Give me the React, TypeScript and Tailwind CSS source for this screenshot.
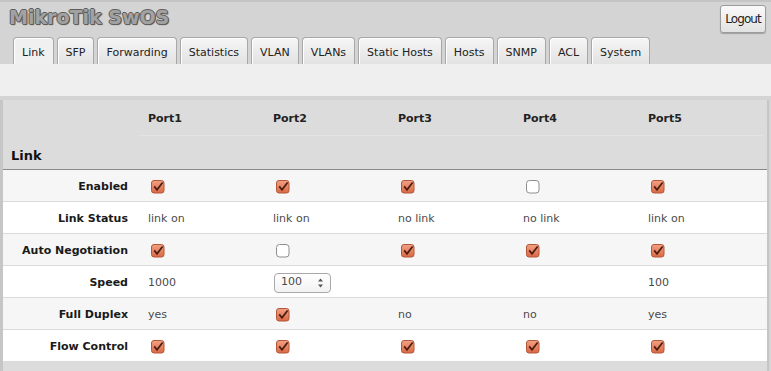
const tabs = ["Link", "SFP", "Forwarding", "Statistics", "VLAN", "VLANs", "Static Hosts", "Hosts", "SNMP", "ACL", "System"];
const ports = ["Port1", "Port2", "Port3", "Port4", "Port5"];

type Cell = boolean | string | { input: string };

const rows: { label: string; cells: Cell[] }[] = [
  { label: "Enabled", cells: [true, true, true, false, true] },
  { label: "Link Status", cells: ["link on", "link on", "no link", "no link", "link on"] },
  { label: "Auto Negotiation", cells: [true, false, true, true, true] },
  { label: "Speed", cells: ["1000", { input: "100" }, "", "", "100"] },
  { label: "Full Duplex", cells: ["yes", true, "no", "no", "yes"] },
  { label: "Flow Control", cells: [true, true, true, true, true] },
];

function Check({ on }: { on: boolean }) {
  if (!on) {
    return (
      <svg width="14" height="14" viewBox="0 0 14 14" className="ml-[3px] block">
        <rect x="0.5" y="0.5" width="12.5" height="12.5" rx="3" fill="#fff" stroke="#8e8e8e" />
      </svg>
    );
  }
  return (
    <svg width="14" height="14" viewBox="0 0 14 14" className="ml-[3px] block">
      <defs>
        <linearGradient id="cbfill" x1="0" y1="0" x2="0" y2="1">
          <stop offset="0" stopColor="#f3a184" />
          <stop offset="1" stopColor="#db6843" />
        </linearGradient>
      </defs>
      <rect x="0.5" y="0.5" width="12.5" height="12.5" rx="2.5" fill="url(#cbfill)" stroke="#b1573a" />
      <path d="M3.2 6.4 L6 9.8 L11.6 2.4" stroke="#4b1d10" strokeWidth="1.7" fill="none" />
    </svg>
  );
}

function SpeedInput({ value }: { value: string }) {
  return (
    <div className="ml-px flex h-[20px] w-[57px] items-center justify-between rounded-[4px] border border-[#a9a9a9] bg-gradient-to-b from-white to-[#f2f2f2] pl-[6px] pr-[6px]">
      <span>{value}</span>
      <svg width="7" height="12" viewBox="0 0 7 12">
        <path d="M1 4.5 L3.5 1.5 L6 4.5 Z" fill="#555" />
        <path d="M1 7.5 L3.5 10.5 L6 7.5 Z" fill="#555" />
      </svg>
    </div>
  );
}

function CellView({ cell }: { cell: Cell }) {
  if (typeof cell === "boolean") return <Check on={cell} />;
  if (typeof cell === "string") return <span className="pt-[2px]">{cell}</span>;
  return <SpeedInput value={cell.input} />;
}

export default function App() {
  return (
    <div className="h-[371px] w-[771px] overflow-hidden bg-[#d4d4d4] font-['DejaVu_Sans',sans-serif] text-[11px]">
      <div className="flex h-[37px] items-start justify-between border-t-2 border-[#c4c4c4]">
        <h1 className="pl-[9px] pt-[5px] text-[19px] font-bold leading-[20px] text-[#a2a2a2] [text-shadow:-1px_0_0_#5e5e5e,1px_0_0_#5e5e5e,0_-1px_0_#5e5e5e,0_1px_0_#5e5e5e,1px_1px_1px_#444]">
          MikroTik SwOS
        </h1>
        <button className="mr-[5px] mt-[3px] h-[28px] w-[46px] rounded-[3px] border border-[#9c9c9c] bg-gradient-to-b from-[#fafafa] to-[#e2e2e2] text-[12px] tracking-[-0.9px] text-[#1e1e1e] shadow-[0_1px_1px_rgba(0,0,0,0.25)]">
          Logout
        </button>
      </div>

      <div className="flex h-[27px] items-end gap-[3px] pl-[13px]">
        {tabs.map((t, i) => (
          <div
            key={t}
            className={
              i === 0
                ? "flex h-[27px] items-center rounded-t-[4px] border border-b-0 border-[#a8a8a8] bg-[#f0f0f0] px-2 pt-[4px] text-[#222] shadow-[inset_1px_1px_0_#fff]"
                : "flex h-[27px] items-center rounded-t-[4px] border border-b-0 border-[#a8a8a8] bg-gradient-to-b from-[#f6f6f6] to-[#e2e2e2] px-2 pt-[4px] text-[#222] shadow-[inset_1px_1px_0_#fff]"
            }
          >
            {t}
          </div>
        ))}
      </div>

      <div className="h-[32px] bg-[#efefef]" />

      <div className="mt-[4px] h-[271px] w-[769px] border-x-[3px] border-r-2 border-[#c6c6c6] bg-[#dcdcdc]">
        <div className="grid h-[36px] grid-cols-[135px_repeat(5,125px)] items-center font-bold text-[#222]">
          <div />
          {ports.map((p) => (
            <div key={p} className="flex h-full items-center border-b border-[#e3e3e3] pl-[10px] pt-[4px]">
              {p}
            </div>
          ))}
        </div>
        <div className="h-[34px] border-b border-[#8a8a8a] pl-[8px] pt-[12px] text-[13px] font-bold leading-[16px] text-[#111]">
          Link
        </div>
        {rows.map((r, ri) => (
          <div
            key={r.label}
            className={
              ri % 2 === 0
                ? "grid h-[32px] grid-cols-[135px_repeat(5,125px)] items-center border-b border-[#dadada] bg-[#f6f6f6] pt-[2px]"
                : "grid h-[32px] grid-cols-[135px_repeat(5,125px)] items-center border-b border-[#dadada] bg-white pt-[2px]"
            }
          >
            <div className="pr-[10px] pt-[2px] text-right font-bold text-[#1a1a1a]">{r.label}</div>
            {r.cells.map((c, ci) => (
              <div key={ci} className="flex items-center pl-[10px] text-[#4a4a4a]">
                <CellView cell={c} />
              </div>
            ))}
          </div>
        ))}
      </div>
    </div>
  );
}
